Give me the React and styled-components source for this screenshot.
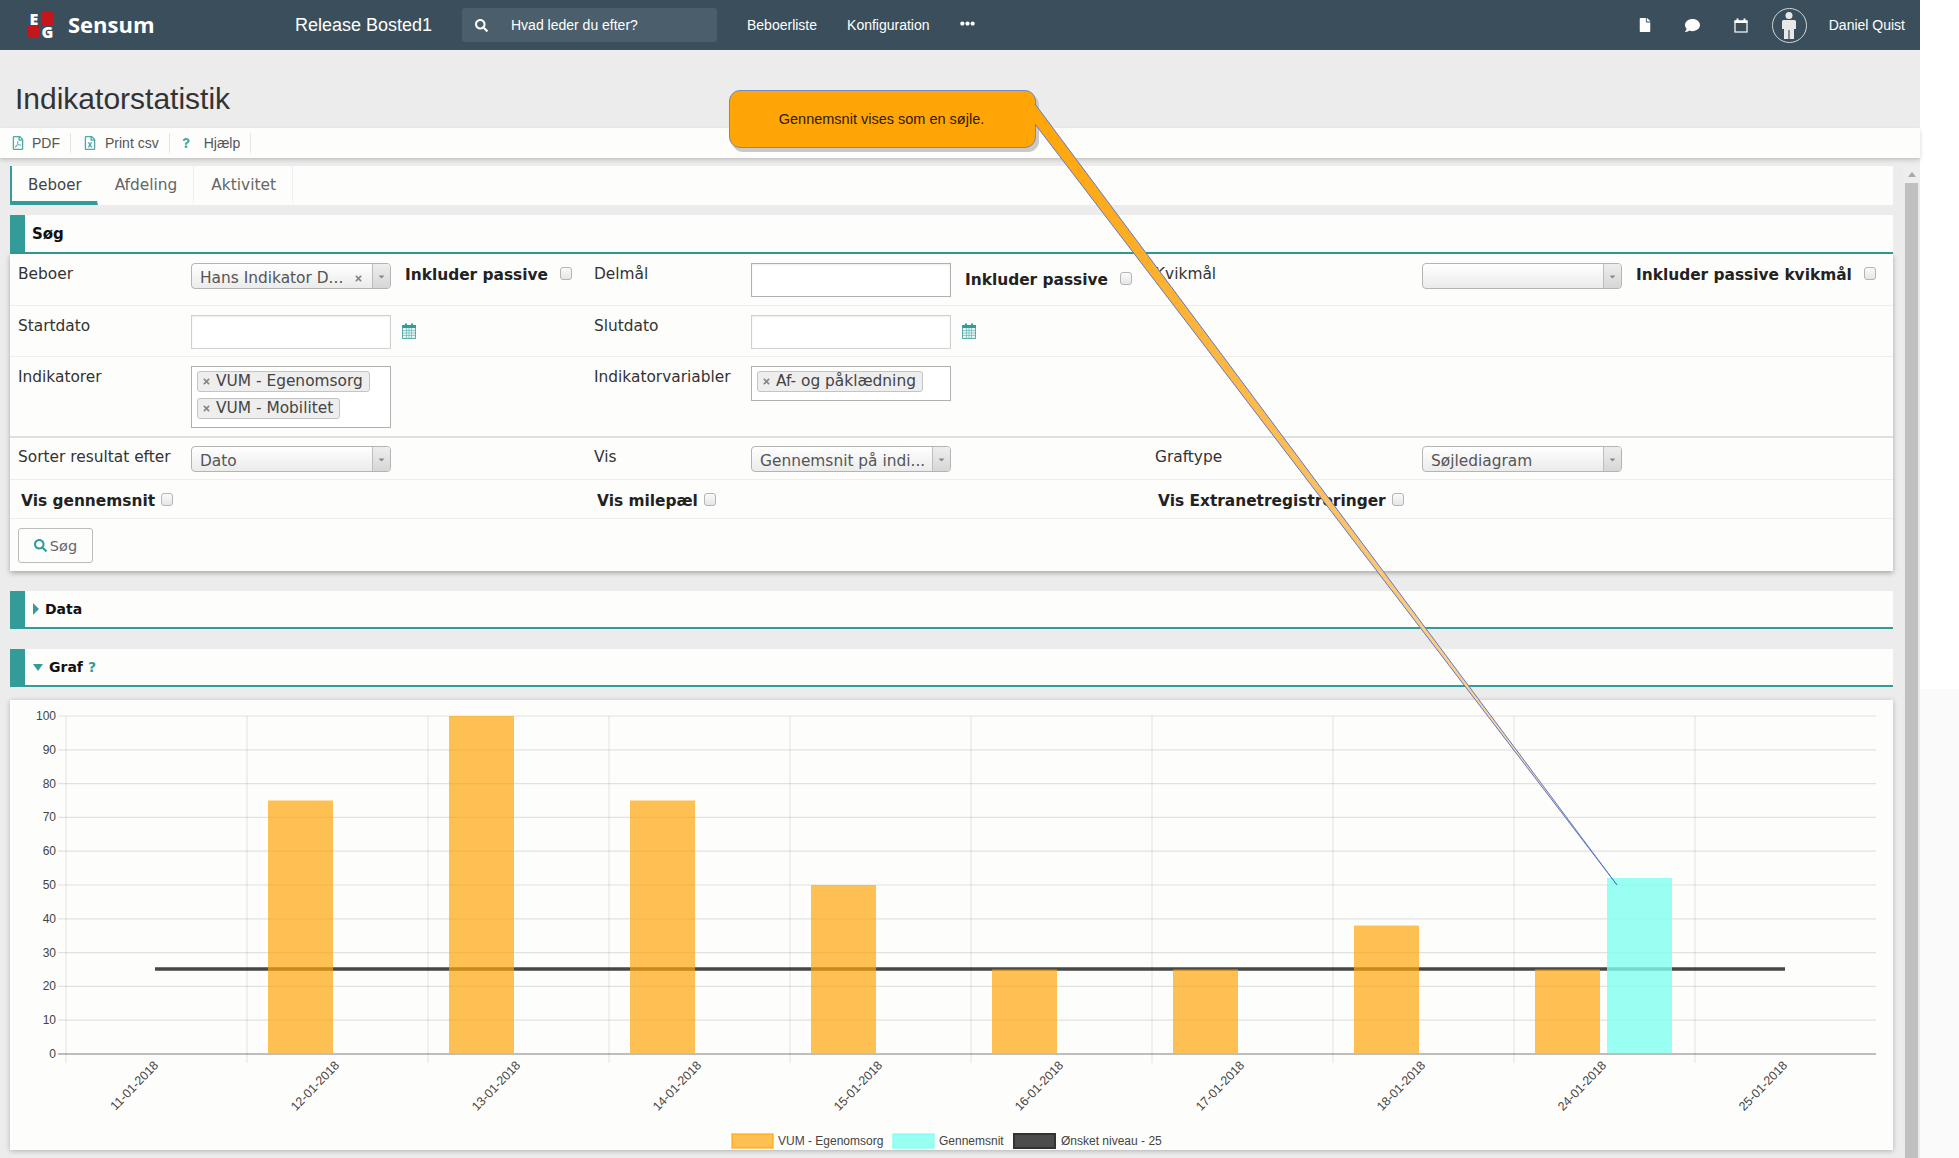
import React from 'react';
import styled, { createGlobalStyle } from 'styled-components';
import { FaSearch, FaFile, FaComment, FaEllipsisH, FaRegFilePdf, FaRegFileExcel, FaQuestion, FaTimes, FaCaretDown } from 'react-icons/fa';

const TEAL = '#339b98';
const ARIAL = '"Liberation Sans", Arial, sans-serif';
const VERDANA = '"DejaVu Sans", Verdana, sans-serif';

const Global = createGlobalStyle`
  html, body { margin: 0; padding: 0; background: #fff; }
  * { box-sizing: border-box; }
`;

const Root = styled.div`
  position: relative; display: flex; width: 1959px; height: 1158px; overflow: hidden;
  font-family: ${VERDANA}; color: #333;
`;
const Page = styled.div`
  width: 1920px; flex: none; display: flex; flex-direction: column; background: #ececec;
`;
const Strip = styled.div`
  flex: 1; display: grid; grid-template-rows: 689px 1fr; background: #fff;
  &::after { content: ''; grid-row: 2; background: #fafafa; }
`;

const Nav = styled.header`
  height: 50px; flex: none; display: flex; align-items: center; background: #3a4f5b;
  color: #fff; font-family: ${ARIAL}; font-size: 14px; padding-left: 28px;
`;
const Logo = styled.div`
  width: 26px; height: 26px; flex: none; display: grid; gap: 1px;
  grid-template-columns: 12px 13px; grid-template-rows: 13px 12px;
`;
const LogoCell = styled.span`
  display: flex; align-items: center; justify-content: center;
  font: 800 16px/12px "Open Sans", sans-serif; color: #fff;
  background: ${p => (p.$red ? '#c4161c' : 'transparent')};
`;
const Brand = styled.span`
  margin: -3px 0 0 14px; font: 700 22px "Open Sans", sans-serif; width: 85px; white-space: nowrap;
`;
const Release = styled.span`margin-left: 142px; font-size: 18px; width: 137px; white-space: nowrap;`;
const SearchBox = styled.div`
  margin-left: 30px; width: 255px; height: 34px; border-radius: 3px; background: #4a5f6b;
  display: flex; align-items: center; gap: 23px; padding-left: 13px;
`;
const NavLink = styled.a`margin-left: 30px; white-space: nowrap;`;
const Dots = styled.a`margin: -3px 0 0 30px; display: block; line-height: 0;`;
const NavRight = styled.div`margin-left: auto; display: flex; align-items: center; padding-right: 15px;`;
const NavIcon = styled.span`width: 48px; display: flex; justify-content: center; align-items: center;`;
const Avatar = styled.span`
  width: 35px; height: 35px; margin-left: 1px; border-radius: 50%; border: 1px solid #cfd6da;
  display: flex; align-items: center; justify-content: center;
`;
const UserName = styled.span`margin-left: 16px; white-space: nowrap;`;

const TitleBar = styled.div`
  height: 78px; flex: none; padding: 32px 0 0 15px; font: 30px/34px ${ARIAL}; color: #333;
`;
const Toolbar = styled.div`
  height: 30px; flex: none; display: flex; align-items: center; background: #fdfdfb;
  box-shadow: 0 2px 4px rgba(0,0,0,.18); position: relative; z-index: 1;
`;
const ToolItem = styled.a`
  height: 20px; display: flex; align-items: center; gap: ${p => p.$gap}px;
  padding: 0 10px 0 ${p => p.$left}px; border-right: 1px solid #e4e4e4;
  font: 14px ${ARIAL}; color: #555; white-space: nowrap;
  svg { color: ${TEAL}; opacity: .85; flex: none; }
`;

const Body = styled.div`flex: 1; display: flex; padding-left: 10px; min-height: 0;`;
const Main = styled.main`width: 1883px; flex: none; padding-top: 8px; margin-right: 10px;`;

const Tabs = styled.nav`height: 39px; display: flex; background: #fdfdfb;`;
const Tab = styled.a`
  display: flex; align-items: center; padding: 3px 16px 0 17px; font-size: 15.4px;
  color: ${p => (p.$active ? '#444' : '#666')};
  border-right: 1px solid #eee; border-bottom: 4px solid transparent;
  ${p => p.$active && `padding: 3px 15px 0 16px; font-size: 15px; border-left: 2px solid ${TEAL}; border-bottom-color: ${TEAL}; border-right-color: #fdfdfb;`}
`;

const SectionHead = styled.div`
  height: ${p => p.$h}px; margin-top: ${p => p.$mt}px; background: #fdfdfb;
  border-left: 15px solid ${TEAL}; border-bottom: 2px solid ${TEAL};
  display: flex; align-items: center; gap: 6px; padding-left: 7px;
  font-size: ${p => p.$size ?? 14}px; font-weight: 700; color: #111;
`;
const CaretRight = styled.i`
  width: 0; height: 0; margin-left: 1px; border-left: 6px solid ${TEAL};
  border-top: 6px solid transparent; border-bottom: 6px solid transparent;
`;
const CaretDown = styled.i`
  width: 0; height: 0; margin-left: 1px; border-top: 7px solid ${TEAL};
  border-left: 5px solid transparent; border-right: 5px solid transparent;
`;
const Help = styled.span`color: ${TEAL}; margin-left: -1px;`;

const FormCard = styled.section`
  background: #fdfdfb; box-shadow: 0 2px 5px rgba(0,0,0,.3); height: 317px;
`;
const Row = styled.div`
  display: grid; grid-template-columns: 173px 403px 157px 404px 267px 1fr;
  height: ${p => p.$h}px; padding: ${p => p.$top ?? 9}px 0 0 8px;
  border-bottom: ${p => p.$thick ? 2 : 1}px solid ${p => p.$thick ? '#e0e0e0' : '#eeeeec'};
  ${p => p.$last && 'border-bottom: none;'}
`;
const Label = styled.label`
  font-size: 15.4px; line-height: 20px; margin-top: 1px; color: #333; white-space: nowrap;
`;
const Cell = styled.div`display: flex; align-items: flex-start; min-width: 0;`;
const WideCell = styled(Cell)`grid-column: span 2;`;
const BoldLabel = styled.label`
  margin: ${p => p.$mt ?? 2}px 0 0 ${p => p.$ml ?? 14}px;
  font-size: 15.4px; font-weight: 700; line-height: 20px; color: #222; white-space: nowrap;
`;
const Check = styled.input.attrs({ type: 'checkbox' })`
  appearance: none; width: 12px; height: 13px; flex: none;
  margin: ${p => p.$mt ?? 4}px 0 0 ${p => p.$ml ?? 12}px;
  border: 1px solid #b5b5b5; border-radius: 3px;
  background: linear-gradient(#fafafa, #e6e6e6);
`;
const Select = styled.div`
  width: 200px; height: 26px; flex: none; display: flex; align-items: stretch;
  border: 1px solid #b4b4b4; border-radius: 4px; overflow: hidden;
  background: linear-gradient(#ffffff, #ebebeb); font-size: 15.4px; color: #555;
`;
const SelectText = styled.span`
  flex: 1; display: flex; align-items: center; padding: 3px 9px 0 8px;
  min-width: 0; white-space: nowrap; justify-content: space-between;
`;
const SelectArrow = styled.span`
  width: 18px; flex: none; display: flex; align-items: center; justify-content: center;
  border-left: 1px solid #bdbdbd; background: linear-gradient(#eeeeee, #d6d6d6); color: #888;
`;
const Clear = styled(FaTimes)`color: #888; flex: none; width: 9px; height: 9px; margin-top: 1px;`;
const TextInput = styled.input`
  width: 200px; height: 34px; flex: none; padding: 0 8px; border-radius: 0;
  background: #fff; border: 1px solid ${p => (p.$dark ? '#b0b0b0' : '#d0d0d0')};
  box-shadow: inset 0 1px 2px rgba(0,0,0,.08);
`;
const CalendarIcon = styled.svg`flex: none; margin: 8px 0 0 11px;`;
const Multi = styled.div`
  width: 200px; height: ${p => p.$h}px; flex: none; background: #fff; border: 1px solid #b0b0b0;
  padding: 4px 5px; display: flex; flex-direction: column; align-items: flex-start; gap: 6px;
`;
const Chip = styled.span`
  height: 21px; display: flex; align-items: center; gap: 5px; padding: 0 6px 2px 4px;
  background: #eeeeee; border: 1px solid #c4c4c4; border-radius: 3px;
  font-size: 15.4px; color: #444; white-space: nowrap;
`;
const Button = styled.button`
  width: 75px; height: 35px; background: #fdfdfb; border: 1px solid #bbbbbb; border-radius: 3px;
  display: flex; align-items: center; justify-content: center; gap: 3px;
  font: 14.5px ${VERDANA}; color: #666; padding: 0;
  svg { color: ${TEAL}; }
`;

const ChartCard = styled.section`
  margin-top: 13px; height: 450px; background: #fdfdfb; box-shadow: 0 1px 5px rgba(0,0,0,.25);
`;
const ChartSvg = styled.svg`
  display: block;
  text { font-family: ${ARIAL}; font-size: 12px; fill: #444; }
  text.date { font-size: 12.4px; }
`;

const ScrollTrack = styled.div`
  width: 17px; flex: none; margin-top: 8px; display: flex; flex-direction: column; background: #ebebeb;
`;
const ScrollUp = styled.div`
  height: 17px; flex: none; background: #eeeeee; display: flex; align-items: center; justify-content: center;
  &::before {
    content: ''; border-bottom: 5px solid #a8a8a8;
    border-left: 4px solid transparent; border-right: 4px solid transparent;
  }
`;
const ScrollThumb = styled.div`flex: 1; width: 13px; margin-left: 2px; background: #c0c0c0;`;

const Callout = styled.div`
  position: absolute; left: 729px; top: 90px; width: 307px; height: 58px; z-index: 3;
  display: flex; align-items: center; justify-content: center; padding: 0 2px 0 0;
  background: #ffa506; border: 1.5px solid #7388c4; border-radius: 11px;
  box-shadow: 3px 4px 0 #c9c9c9; font: 14.5px ${ARIAL}; color: #2e1a00;
`;
const Pointer = styled.svg`position: absolute; left: 0; top: 0; z-index: 4; pointer-events: none;`;

const barColor = 'rgba(253,165,10,.7)';
const cyanColor = 'rgba(127,255,240,.8)';
const bars = [
  [268, 75], [449, 100], [630, 75], [811, 50], [992, 25], [1173, 25], [1354, 38], [1535, 25],
];
const dates = ['11-01-2018', '12-01-2018', '13-01-2018', '14-01-2018', '15-01-2018', '16-01-2018', '17-01-2018', '18-01-2018', '24-01-2018', '25-01-2018'];
const Y0 = 1054;
const yOf = v => Y0 - v * 3.38;

function Calendar() {
  return (
    <CalendarIcon width="14" height="16" viewBox="0 0 14 16">
      <rect x="0.5" y="2.5" width="13" height="13" fill="#e4f3f3" stroke="#339b98" strokeWidth=".8" />
      <rect x="0" y="2" width="14" height="3" fill="#339b98" />
      <rect x="3" y="0.5" width="2" height="3.5" fill="#339b98" />
      <rect x="9" y="0.5" width="2" height="3.5" fill="#339b98" />
      <path d="M4.5 5v10M7 5v10M9.5 5v10M1 7.5h12M1 10h12M1 12.5h12" stroke="#5aaeac" strokeWidth=".6" />
    </CalendarIcon>
  );
}

function Sel({ children, clear }) {
  return (
    <Select>
      <SelectText>{children}{clear && <Clear />}</SelectText>
      <SelectArrow><FaCaretDown size={9} /></SelectArrow>
    </Select>
  );
}

function Tag({ children }) {
  return <Chip><Clear />{children}</Chip>;
}

function Chart() {
  return (
    <ChartSvg width="1883" height="450" viewBox="10 700 1883 450">
      {Array.from({ length: 11 }, (_, i) => (
        <g key={i}>
          <line x1="58" x2="1876" y1={yOf(i * 10)} y2={yOf(i * 10)} stroke={i === 0 ? '#a8a8a8' : '#e2e2e0'} strokeWidth={i === 0 ? 1.5 : 1.2} />
          <text x="56" y={yOf(i * 10) + 4} textAnchor="end">{i * 10}</text>
        </g>
      ))}
      {Array.from({ length: 10 }, (_, i) => {
        const x = 66 + i * 181;
        return <line key={i} x1={x} x2={x} y1="716" y2="1063" stroke="rgba(0,0,0,.1)" />;
      })}
      <line x1="155" x2="1785" y1="969" y2="969" stroke="rgba(0,0,0,.72)" strokeWidth="3.4" />
      {bars.map(([x, v]) => (
        <rect key={x} x={x} y={yOf(v)} width="65" height={Y0 - 1 - yOf(v)} fill={barColor} />
      ))}
      <rect x="1607" y="878" width="65" height="175" fill={cyanColor} />
      {dates.map((d, i) => {
        const x = 159 + i * 181;
        return <text className="date" key={d} textAnchor="end" transform={`translate(${x} 1066) rotate(-46)`}>{d}</text>;
      })}
      <rect x="732" y="1134" width="41" height="14" fill={barColor} stroke="rgba(255,165,0,.55)" strokeWidth="2" />
      <text x="778" y="1145">VUM - Egenomsorg</text>
      <rect x="893" y="1134" width="41" height="14" fill={cyanColor} stroke="rgba(127,255,240,.6)" strokeWidth="2" />
      <text x="939" y="1145">Gennemsnit</text>
      <rect x="1014" y="1134" width="41" height="14" fill="#4c4c4c" stroke="#333" strokeWidth="2" />
      <text x="1061" y="1145">Ønsket niveau - 25</text>
    </ChartSvg>
  );
}

export default function App() {
  return (
    <Root>
      <Global />
      <Page>
        <Nav>
          <Logo>
            <LogoCell>E</LogoCell>
            <LogoCell $red />
            <LogoCell $red />
            <LogoCell>G</LogoCell>
          </Logo>
          <Brand>Sensum</Brand>
          <Release>Release Bosted1</Release>
          <SearchBox><FaSearch size={13} />Hvad leder du efter?</SearchBox>
          <NavLink>Beboerliste</NavLink>
          <NavLink>Konfiguration</NavLink>
          <Dots><FaEllipsisH size={15} /></Dots>
          <NavRight>
            <NavIcon><FaFile size={14} /></NavIcon>
            <NavIcon><FaComment size={15} /></NavIcon>
            <NavIcon>
              <svg width="14" height="15" viewBox="0 0 14 15" fill="none" stroke="#fff">
                <rect x="1" y="3" width="12" height="11" strokeWidth="1.2" />
                <rect x="0.6" y="2.5" width="12.8" height="2.5" fill="#fff" strokeWidth="0" />
                <path d="M3.5 0.5v3M10.5 0.5v3" strokeWidth="2" />
              </svg>
            </NavIcon>
            <NavIcon>
              <Avatar>
                <svg width="16" height="27" viewBox="0 0 16 27" fill="#e8e8e8">
                  <circle cx="8" cy="3.5" r="3.5" />
                  <path d="M2.5 8h11q1.5 0 1.5 1.5V17h-2v10H8.6V18h-1.2v9H3V17H1V9.5Q1 8 2.5 8z" />
                </svg>
              </Avatar>
            </NavIcon>
            <UserName>Daniel Quist</UserName>
          </NavRight>
        </Nav>
        <TitleBar>Indikatorstatistik</TitleBar>
        <Toolbar>
          <ToolItem $left={11} $gap={7}><FaRegFilePdf size={14} />PDF</ToolItem>
          <ToolItem $left={12} $gap={8}><FaRegFileExcel size={14} />Print csv</ToolItem>
          <ToolItem $left={11} $gap={13}><FaQuestion size={10} />Hjælp</ToolItem>
        </Toolbar>
        <Body>
          <Main>
            <Tabs>
              <Tab $active>Beboer</Tab>
              <Tab>Afdeling</Tab>
              <Tab>Aktivitet</Tab>
            </Tabs>
            <SectionHead $h={39} $mt={10} $size={15}>Søg</SectionHead>
            <FormCard>
              <Row $h={52}>
                <Label>Beboer</Label>
                <Cell>
                  <Sel clear>Hans Indikator D...</Sel>
                  <BoldLabel>Inkluder passive</BoldLabel>
                  <Check />
                </Cell>
                <Label>Delmål</Label>
                <Cell>
                  <TextInput $dark />
                  <BoldLabel $mt={7}>Inkluder passive</BoldLabel>
                  <Check $mt={9} />
                </Cell>
                <Label>Kvikmål</Label>
                <Cell>
                  <Sel />
                  <BoldLabel>Inkluder passive kvikmål</BoldLabel>
                  <Check />
                </Cell>
              </Row>
              <Row $h={51}>
                <Label>Startdato</Label>
                <Cell><TextInput /><Calendar /></Cell>
                <Label>Slutdato</Label>
                <Cell><TextInput /><Calendar /></Cell>
              </Row>
              <Row $h={81} $thick>
                <Label>Indikatorer</Label>
                <Cell>
                  <Multi $h={62}>
                    <Tag>VUM - Egenomsorg</Tag>
                    <Tag>VUM - Mobilitet</Tag>
                  </Multi>
                </Cell>
                <Label>Indikatorvariabler</Label>
                <Cell>
                  <Multi $h={35}>
                    <Tag>Af- og påklædning</Tag>
                  </Multi>
                </Cell>
              </Row>
              <Row $h={42} $top={8}>
                <Label>Sorter resultat efter</Label>
                <Cell><Sel>Dato</Sel></Cell>
                <Label>Vis</Label>
                <Cell><Sel>Gennemsnit på indi...</Sel></Cell>
                <Label>Graftype</Label>
                <Cell><Sel>Søjlediagram</Sel></Cell>
              </Row>
              <Row $h={39} $top={10}>
                <WideCell><BoldLabel $ml={3} $mt={1}>Vis gennemsnit</BoldLabel><Check $ml={6} $mt={3} /></WideCell>
                <WideCell><BoldLabel $ml={3} $mt={1}>Vis milepæl</BoldLabel><Check $ml={6} $mt={3} /></WideCell>
                <WideCell><BoldLabel $ml={3} $mt={1}>Vis Extranetregistreringer</BoldLabel><Check $ml={6} $mt={3} /></WideCell>
              </Row>
              <Row $h={52} $last>
                <Button><FaSearch size={13} />Søg</Button>
              </Row>
            </FormCard>
            <SectionHead $h={38} $mt={20}><CaretRight />Data</SectionHead>
            <SectionHead $h={38} $mt={20}><CaretDown />Graf <Help>?</Help></SectionHead>
            <ChartCard><Chart /></ChartCard>
          </Main>
          <ScrollTrack><ScrollUp /><ScrollThumb /></ScrollTrack>
        </Body>
      </Page>
      <Strip />
      <Pointer width="1959" height="1158" viewBox="0 0 1959 1158">
        <defs>
          <linearGradient id="wedge" gradientUnits="userSpaceOnUse" x1="1035" y1="104" x2="1617" y2="885">
            <stop offset="0" stopColor="#ffa506" />
            <stop offset=".5" stopColor="#fdc060" />
            <stop offset="1" stopColor="#fde3b8" />
          </linearGradient>
        </defs>
        <polygon points="1035,104 1617,885 1035,124" fill="url(#wedge)" />
        <path d="M1035 104L1617 885L1035 124" fill="none" stroke="#5f78c8" strokeWidth="1" />
      </Pointer>
      <Callout>Gennemsnit vises som en søjle.</Callout>
    </Root>
  );
}
